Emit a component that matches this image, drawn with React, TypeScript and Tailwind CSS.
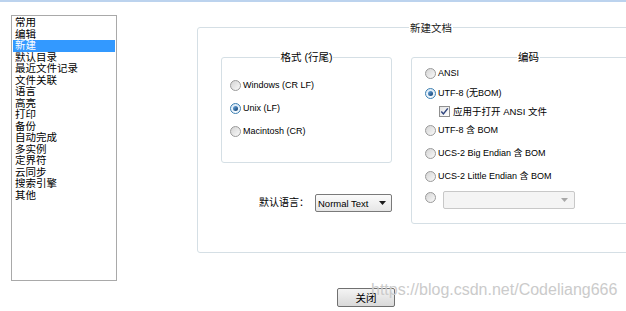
import React from 'react';

const cats = [
  '常用',
  '编辑',
  '新建',
  '默认目录',
  '最近文件记录',
  '文件关联',
  '语言',
  '高亮',
  '打印',
  '备份',
  '自动完成',
  '多实例',
  '定界符',
  '云同步',
  '搜索引擎',
  '其他',
];

const Radio: React.FC<{ on?: boolean }> = ({ on }) => (
  <span
    className={
      'flex h-[11px] w-[11px] shrink-0 items-center justify-center rounded-full border ' +
      (on
        ? 'border-[#3c7fb1] bg-linear-to-b from-[#dbe9f6] to-[#f7fbff]'
        : 'border-[#9a9a9a] bg-linear-to-br from-[#d4d4d4] to-[#fafafa]')
    }
  >
    {on ? <span className="h-[5px] w-[5px] rounded-full bg-linear-to-br from-[#6fb0e8] to-[#0d3a6a]" /> : null}
  </span>
);

const Check: React.FC = () => (
  <span className="flex h-[11px] w-[11px] shrink-0 items-center justify-center border border-[#8f8f8f] bg-linear-to-br from-[#e4e4e4] to-white">
    <svg width="9" height="9" viewBox="0 0 9 9">
      <path d="M1.3 4.6 L3.4 6.9 L7.8 1.4" fill="none" stroke="#31467f" strokeWidth="1.5" />
    </svg>
  </span>
);

const Arrow: React.FC<{ color: string }> = ({ color }) => (
  <svg width="7" height="4" viewBox="0 0 7 4">
    <path d="M0 0 H7 L3.5 4 Z" fill={color} />
  </svg>
);

const Option: React.FC<{ on?: boolean; label: string; h: string }> = ({ on, label, h }) => (
  <div className={'flex items-center gap-[2px] ' + h}>
    <Radio on={on} />
    <span className="text-[9px] leading-[11px] whitespace-nowrap">{label}</span>
  </div>
);

export default function App() {
  return (
    <div className="relative h-[311px] w-[626px] overflow-hidden bg-white font-['Liberation_Sans','Noto_Sans_CJK_SC',sans-serif] text-black">
      <div className="h-[2px] bg-[#bcd3ee]" />
      <div className="flex items-start">
        {/* category list */}
        <div className="ml-[11px] mt-[13px] h-[266px] w-[106px] shrink-0 border border-[#a9a9a9] p-[1px]">
          {cats.map((c) => (
            <div
              key={c}
              className={
                'h-[11.5px] pl-[2px] text-[10.5px] leading-[11.5px] whitespace-nowrap ' +
                (c === '新建' ? 'bg-[#3399ff] text-white' : '')
              }
            >
              {c}
            </div>
          ))}
        </div>

        {/* 新建文档 */}
        <div className="relative ml-[80px] mt-[25px] h-[226px] w-[470px] shrink-0 rounded-[3px] border border-[#d5dfe5]">
          <span className="absolute left-[211px] top-[-6px] bg-white px-[1px] text-[10.5px] leading-[12px] text-[#1a1a1a]">
            新建文档
          </span>
          <div className="flex items-start pl-[23px] pt-[29px]">
            <div className="flex w-[171px] flex-col">
              {/* 格式 */}
              <div className="relative h-[106px] rounded-[3px] border border-[#d5dfe5] pl-[8px] pt-[16px]">
                <span className="absolute left-1/2 top-[-7px] -translate-x-1/2 bg-white px-[1px] text-[10.5px] leading-[12px] whitespace-nowrap">
                  格式 (行尾)
                </span>
                <Option label="Windows (CR LF)" h="h-[23px]" />
                <Option on label="Unix (LF)" h="h-[23px]" />
                <Option label="Macintosh (CR)" h="h-[23px]" />
              </div>
              {/* 默认语言 */}
              <div className="mt-[31px] flex items-center pl-[38px]">
                <span className="text-[10px] leading-[18px] whitespace-nowrap">默认语言：</span>
                <div className="ml-[6px] flex h-[18px] w-[79px] items-center justify-between rounded-[2px] border border-[#7a7a7a] bg-linear-to-b from-[#fbfbfb] to-[#e6e6e6] pl-[2px] pr-[5px]">
                  <span className="text-[9.5px] leading-[11px]">Normal Text</span>
                  <Arrow color="#1b1b1b" />
                </div>
              </div>
            </div>

            {/* 编码 */}
            <div className="relative ml-[19px] h-[167px] w-[233px] rounded-[3px] border border-[#d5dfe5] pl-[13px] pt-[5px]">
              <span className="absolute left-[105px] top-[-7px] bg-white px-[1px] text-[10.5px] leading-[12px]">
                编码
              </span>
              <Option label="ANSI" h="h-[20px]" />
              <Option on label="UTF-8 (无BOM)" h="h-[20px]" />
              <div className="flex h-[17px] items-center gap-[3px] pl-[14px]">
                <Check />
                <span className="text-[9.5px] leading-[11px] whitespace-nowrap">应用于打开 ANSI 文件</span>
              </div>
              <Option label="UTF-8 含 BOM" h="h-[20px]" />
              <Option label="UCS-2 Big Endian 含 BOM" h="h-[26px]" />
              <Option label="UCS-2 Little Endian 含 BOM" h="h-[20px]" />
              <div className="flex items-start">
                <div className="mt-[6px]">
                  <Radio />
                </div>
                <div className="ml-[7px] mt-[5px] flex h-[18px] w-[132px] items-center justify-end rounded-[2px] border border-[#c8c8c8] bg-[#f4f4f4] pr-[6px]">
                  <Arrow color="#a8a8a8" />
                </div>
              </div>
            </div>
          </div>
        </div>
      </div>

      {/* 关闭 */}
      <div className="mt-[7px] flex">
        <button className="ml-[337px] flex h-[19px] w-[58px] items-center justify-center rounded-[2px] border border-[#707070] bg-linear-to-b from-[#f4f4f4] to-[#d9d9d9] text-[10.5px] leading-[12px]">
          关闭
        </button>
      </div>

      <span className="pointer-events-none absolute left-[371px] top-[282px] font-['Liberation_Sans',sans-serif] text-[16px] leading-[16px] whitespace-nowrap text-[#cbcbcb]">
        https://blog.csdn.net/Codeliang666
      </span>
    </div>
  );
}
